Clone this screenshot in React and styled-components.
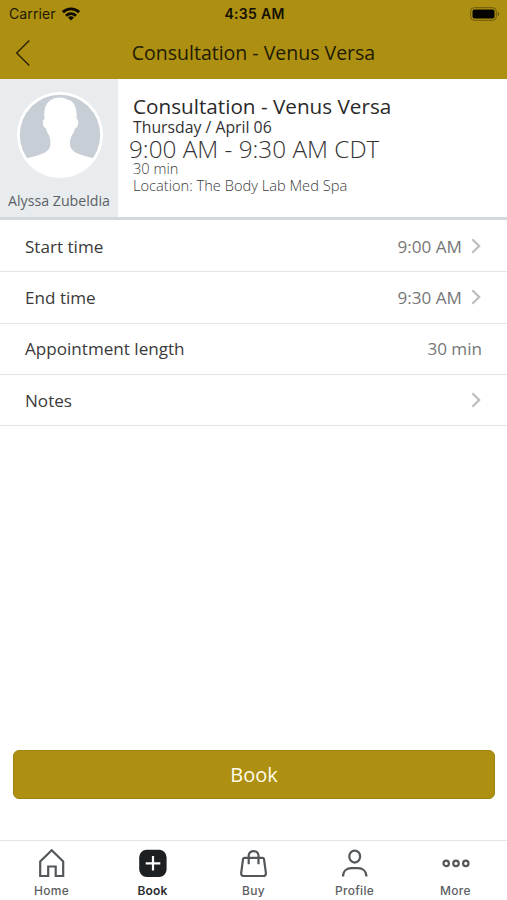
import React from "react";
import styled, { createGlobalStyle } from "styled-components";

const GlobalStyle = createGlobalStyle`
  * {
    box-sizing: border-box;
  }
  body {
    margin: 0;
    background: #fff;
    font-family: "Open Sans", "Noto Sans", sans-serif;
  }
`;

const rows = [
  { label: "Start time", value: "9:00 AM", arrow: true },
  { label: "End time", value: "9:30 AM", arrow: true },
  { label: "Appointment length", value: "30 min", arrow: false },
  { label: "Notes", value: "", arrow: true },
];

const HomeIcon = () => (
  <TabSvg viewBox='0 0 32 32'>
    <path d='M4.200 29V14.400L15.700 3.300l11.500 11.100V29h-7.500v-9.500h-7.500V29z' />
  </TabSvg>
);

const BookIcon = () => (
  <TabSvg viewBox='0 0 32 32'>
    <rect x='2.200' y='2.800' width='27.400' height='27.200' rx='7.500' fill='#1d2023' stroke='none' />
    <path d='M16 9v14.600M8.700 16.300h14.600' stroke='#fff' strokeWidth='2.200' />
  </TabSvg>
);

const BagIcon = () => (
  <TabSvg viewBox='0 0 32 32'>
    <path d='M6.500 10.800h18q1.300 0 1.500 1.300l1.900 13.700q.3 3.200-2.800 3.200H6q-3.100 0-2.800-3.200L5 12.100q.2-1.300 1.500-1.300z' />
    <path d='M10.700 17.200V8.200a5 5 0 0 1 9.800 0v9' />
  </TabSvg>
);

const ProfileIcon = () => (
  <TabSvg viewBox='0 0 32 32'>
    <ellipse cx='15.700' cy='9.600' rx='5.400' ry='6' />
    <path d='M4 29.600c0-5.600 4-8.400 8.500-8.400h6.400c4.500 0 8.500 2.800 8.500 8.400' />
  </TabSvg>
);

const MoreIcon = () => (
  <TabSvg viewBox='0 0 32 32'>
    <circle cx='6.200' cy='16.400' r='2.700' />
    <circle cx='16' cy='16.400' r='2.700' />
    <circle cx='25.800' cy='16.400' r='2.700' />
  </TabSvg>
);

const tabs = [
  { name: "Home", icon: <HomeIcon /> },
  { name: "Book", icon: <BookIcon />, active: true },
  { name: "Buy", icon: <BagIcon /> },
  { name: "Profile", icon: <ProfileIcon /> },
  { name: "More", icon: <MoreIcon /> },
];

const App = () => {
  return (
    <Screen>
      <GlobalStyle />
      <Header>
        <StatusBar>
          <Carrier>
            Carrier
            <svg width='18' height='14' viewBox='0 0 18 14'>
              <g fill='none' stroke='#0d0b02' strokeWidth='2.800'>
                <path d='M.9 5.200a11.500 11.500 0 0 1 16.200 0' />
                <path d='M4 8.700a7.200 7.200 0 0 1 10 0' />
              </g>
              <path d='M9 13.600l-3-3a4.200 4.200 0 0 1 6 0z' fill='#0d0b02' />
            </svg>
          </Carrier>
          <Clock>4:35 AM</Clock>
          <Battery width='30' height='14' viewBox='0 0 30 14'>
            <rect x='.7' y='.7' width='25.600' height='12.600' rx='3.600' fill='none' stroke='#6c590c' />
            <rect x='2.500' y='2.500' width='22' height='9' rx='2' fill='#050400' />
            <path d='M27.700 4.800c2 .8 2 3.600 0 4.400z' fill='#6c590c' />
          </Battery>
        </StatusBar>
        <TitleBar>
          <Back aria-label='Back'>
            <svg width='16' height='28' viewBox='0 0 16 28'>
              <path d='M14.300 1.500L1.700 14l12.600 12.500' fill='none' stroke='#2b2405' strokeWidth='1.400' />
            </svg>
          </Back>
          <Title>Consultation - Venus Versa</Title>
        </TitleBar>
      </Header>

      <Summary>
        <Staff>
          <Avatar width='86' height='86' viewBox='0 0 86 86'>
            <clipPath id='avatar'>
              <circle cx='43' cy='43' r='42' />
            </clipPath>
            <circle cx='43' cy='43' r='43' fill='#fff' />
            <circle cx='43' cy='43' r='40.200' fill='#c8ced5' />
            <path
              clipPath='url(#avatar)'
              fill='#fff'
              d='M0 69.500c5-2 10-3.500 15-4.500 10-2.500 16-5 18-10 .8-4 .5-8-1-12-1.500-2-2.500-4-3-6.500-3.500-1-4.500-8.500-1.500-9.500C26 14 31 5.500 43 5.500c4 0 6 1 8 2.500 6 0 9.500 9 8.500 18.500 3 1.500 2 9-1.500 10-.5 2.500-1.500 4.500-3 6.500-2 4-2.500 8-1.500 12 2 5 8 7.500 18 10 5 1 9.500 2.500 14.500 4.500V86H0z'
            />
          </Avatar>
          <StaffName>Alyssa Zubeldia</StaffName>
        </Staff>
        <Details>
          <Service>Consultation - Venus Versa</Service>
          <Day>Thursday / April 06</Day>
          <Time>9:00 AM - 9:30 AM CDT</Time>
          <Duration>30 min</Duration>
          <Location>Location: The Body Lab Med Spa</Location>
        </Details>
      </Summary>

      <List>
        {rows.map((row) => (
          <Row key={row.label}>
            <span>{row.label}</span>
            <Value>
              {row.value}
              {row.arrow && (
                <Chevron width='10' height='16' viewBox='0 0 10 16'>
                  <path d='M1.300 1.300L8.200 8l-6.900 6.700' fill='none' stroke='#bdbdbd' strokeWidth='2.200' />
                </Chevron>
              )}
            </Value>
          </Row>
        ))}
      </List>

      <BookButton>Book</BookButton>

      <TabBar>
        {tabs.map((tab) => (
          <Tab key={tab.name} $active={tab.active}>
            {tab.icon}
            {tab.name}
          </Tab>
        ))}
      </TabBar>
    </Screen>
  );
};

const Screen = styled.div`
  display: flex;
  flex-direction: column;
  width: 507px;
  height: 900px;
  overflow: hidden;
  background: #fff;
  color: #333;
`;

const Header = styled.header`
  height: 79px;
  flex: none;
  background: #ad8f11;
  color: #211b04;
`;

const StatusBar = styled.div`
  display: grid;
  grid-template-columns: 1fr auto 1fr;
  align-items: center;
  height: 27px;
  padding: 0 7px 0 9px;
  font-family: Inter, sans-serif;
  font-size: 14px;
`;

const Carrier = styled.div`
  display: flex;
  align-items: center;
  gap: 6px;
  letter-spacing: 0.1px;
`;

const Clock = styled.div`
  font-weight: 600;
  letter-spacing: 0.3px;
  color: #141002;
`;

const Battery = styled.svg`
  justify-self: end;
`;

const TitleBar = styled.div`
  display: grid;
  grid-template-columns: 40px 1fr 40px;
  align-items: center;
  height: 52px;
`;

const Back = styled.button`
  display: flex;
  padding: 0 0 0 15px;
  border: 0;
  background: none;
`;

const Title = styled.h1`
  margin: 0;
  font-size: 19.500px;
  font-weight: 400;
  line-height: 26px;
  text-align: center;
  white-space: nowrap;
`;

const Summary = styled.section`
  display: flex;
  flex: none;
  height: 141px;
  border-bottom: 3px solid #d3d8dd;
`;

const Staff = styled.div`
  display: flex;
  flex-direction: column;
  align-items: center;
  width: 118px;
  padding-top: 13px;
  background: #e8ecef;
`;

const Avatar = styled.svg`
  margin-left: 2px;
`;

const StaffName = styled.div`
  margin-top: 13px;
  font-size: 14.200px;
  line-height: 20px;
  white-space: nowrap;
  color: #5c6165;
`;

const Details = styled.div`
  padding: 15px 0 0 15px;
  white-space: nowrap;
`;

const Service = styled.div`
  font-size: 20.700px;
  line-height: 25px;
  color: #2a2a2a;
`;

const Day = styled.div`
  font-size: 15.800px;
  line-height: 16px;
  color: #333;
`;

const Time = styled.div`
  margin-left: -4px;
  font-size: 24.300px;
  font-weight: 300;
  line-height: 28px;
  color: #333;
`;

const Duration = styled.div`
  font-size: 14.650px;
  font-weight: 300;
  line-height: 10px;
  color: #3c3c3c;
`;

const Location = styled(Duration)`
  margin-top: 2px;
  line-height: 20px;
`;

const List = styled.div`
  flex: 1;
  padding-top: 1px;
`;

const Row = styled.div`
  display: flex;
  align-items: center;
  justify-content: space-between;
  height: 51.300px;
  padding: 0 25px;
  border-bottom: 1px solid #e4e4e4;
  font-size: 17.100px;
  color: #3a3a3a;
`;

const Value = styled.div`
  display: flex;
  align-items: center;
  color: #777;
`;

const Chevron = styled.svg`
  margin: -1px 1px 0 9px;
`;

const BookButton = styled.button`
  flex: none;
  height: 49px;
  margin: 0 12px 41px 13px;
  border: 1px solid #a0840f;
  border-radius: 6px;
  background: #ad8f11;
  color: #fffbe9;
  font-family: inherit;
  font-size: 20px;
`;

const TabBar = styled.nav`
  display: grid;
  grid-template-columns: repeat(5, 101px);
  justify-content: center;
  flex: none;
  height: 60px;
  border-top: 1px solid #e2e4e5;
`;

const Tab = styled.div`
  display: flex;
  flex-direction: column;
  align-items: center;
  padding-top: 6px;
  font-family: Inter, sans-serif;
  font-size: 12px;
  font-weight: ${({ $active }) => ($active ? 600 : 500)};
  line-height: 20px;
  letter-spacing: ${({ $active }) => ($active ? 0.1 : 0.3)}px;
  color: ${({ $active }) => ($active ? "#2b2d2f" : "#5d6063")};
`;

const TabSvg = styled.svg`
  width: 32px;
  height: 32px;
  margin-bottom: 2px;
  fill: none;
  stroke: #53575a;
  stroke-width: 2.200;
`;

export default App;
